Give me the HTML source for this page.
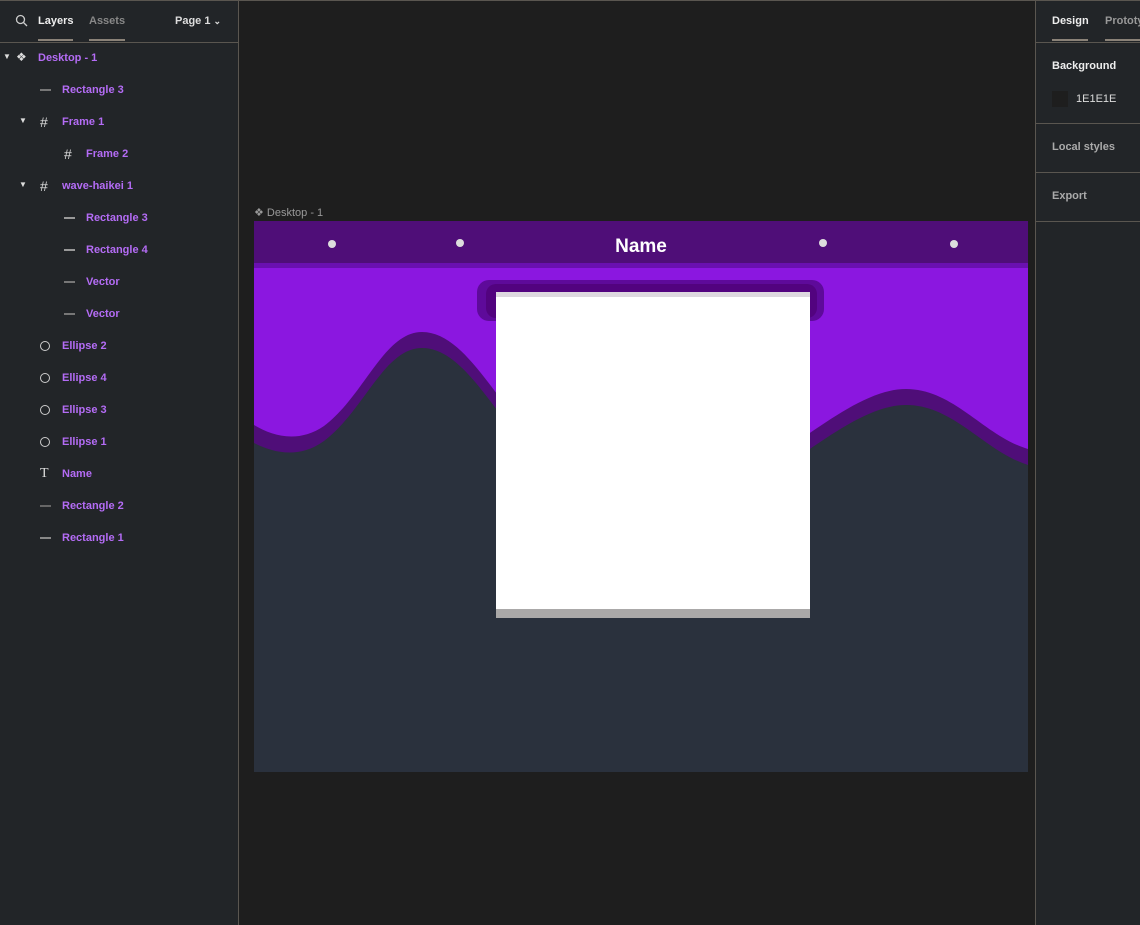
<!DOCTYPE html>
<html><head><style>
*{margin:0;padding:0;box-sizing:border-box}
body{width:1140px;height:925px;background:#1e1e1e;font-family:"Liberation Sans",sans-serif;position:relative;overflow:hidden}
.lp{position:absolute;left:0;top:0;width:239px;height:925px;background:#222528;border-right:1px solid #5a5650;border-top:1px solid #5a5650}
.rp{position:absolute;left:1035px;top:0;width:105px;height:925px;background:#222528;border-left:1px solid #5a5650;border-top:1px solid #5a5650}
.t{position:absolute;font-size:11px;font-weight:bold;white-space:nowrap}
.row{position:absolute;font-size:11px;font-weight:bold;color:#b46cf5;white-space:nowrap}
.ic{position:absolute;color:#ddd;font-size:12px}
.hl{position:absolute;height:1px;background:#5a5650}
</style></head><body>
<div style="position:absolute;left:0;top:0;width:1140px;height:1px;background:#5a5650"></div>
<div style="position:absolute;left:50px;top:0;width:48px;height:2px;background:#1a6fd6"></div>
<div class="lp">
 <svg style="position:absolute;left:15px;top:13px" width="14" height="14" viewBox="0 0 14 14"><circle cx="5.5" cy="5.5" r="4" fill="none" stroke="#ccc" stroke-width="1.3"/><path d="M8.5 8.5L12 12" stroke="#ccc" stroke-width="1.3"/></svg>
 <div class="t" style="left:38px;top:14px;color:#eee">Layers</div>
 <div class="t" style="left:89px;top:14px;color:#888">Assets</div>
 <div style="position:absolute;left:38px;top:38px;width:35px;height:2px;background:#8a8278"></div>
 <div style="position:absolute;left:89px;top:38px;width:36px;height:2px;background:#8a8278"></div>
 <div class="t" style="left:175px;top:14px;color:#ddd">Page 1 <span style="font-size:9px">&#8964;</span></div>
 <div class="hl" style="left:0;top:41px;width:238px"></div>
 <div class="ic" style="left:3px;top:51px;font-size:8px">&#9660;</div>
 <div class="ic" style="left:16px;top:49px;font-size:12px">&#10070;</div>
 <div class="row" style="left:38px;top:51px">Desktop - 1</div>
 <div style="position:absolute;left:40px;top:88px;width:11px;height:2px;background:#777"></div>
 <div class="row" style="left:62px;top:83px">Rectangle 3</div>
 <div class="ic" style="left:19px;top:115px;font-size:8px">&#9660;</div>
 <div class="ic" style="left:40px;top:113px;font-size:14px">#</div>
 <div class="row" style="left:62px;top:115px">Frame 1</div>
 <div class="ic" style="left:64px;top:145px;font-size:14px">#</div>
 <div class="row" style="left:86px;top:147px">Frame 2</div>
 <div class="ic" style="left:19px;top:179px;font-size:8px">&#9660;</div>
 <div class="ic" style="left:40px;top:177px;font-size:14px">#</div>
 <div class="row" style="left:62px;top:179px">wave-haikei 1</div>
 <div style="position:absolute;left:64px;top:216px;width:11px;height:2px;background:#999"></div>
 <div class="row" style="left:86px;top:211px">Rectangle 3</div>
 <div style="position:absolute;left:64px;top:248px;width:11px;height:2px;background:#999"></div>
 <div class="row" style="left:86px;top:243px">Rectangle 4</div>
 <div style="position:absolute;left:64px;top:280px;width:11px;height:2px;background:#777"></div>
 <div class="row" style="left:86px;top:275px">Vector</div>
 <div style="position:absolute;left:64px;top:312px;width:11px;height:2px;background:#777"></div>
 <div class="row" style="left:86px;top:307px">Vector</div>
 <div style="position:absolute;left:40px;top:340px;width:10px;height:10px;border:1px solid #ccc;border-radius:50%"></div>
 <div class="row" style="left:62px;top:339px">Ellipse 2</div>
 <div style="position:absolute;left:40px;top:372px;width:10px;height:10px;border:1px solid #ccc;border-radius:50%"></div>
 <div class="row" style="left:62px;top:371px">Ellipse 4</div>
 <div style="position:absolute;left:40px;top:404px;width:10px;height:10px;border:1px solid #ccc;border-radius:50%"></div>
 <div class="row" style="left:62px;top:403px">Ellipse 3</div>
 <div style="position:absolute;left:40px;top:436px;width:10px;height:10px;border:1px solid #ccc;border-radius:50%"></div>
 <div class="row" style="left:62px;top:435px">Ellipse 1</div>
 <div class="ic" style="left:40px;top:465px;font-size:14px;font-family:'Liberation Serif',serif">T</div>
 <div class="row" style="left:62px;top:467px">Name</div>
 <div style="position:absolute;left:40px;top:504px;width:11px;height:2px;background:#666"></div>
 <div class="row" style="left:62px;top:499px">Rectangle 2</div>
 <div style="position:absolute;left:40px;top:536px;width:11px;height:2px;background:#888"></div>
 <div class="row" style="left:62px;top:531px">Rectangle 1</div>
</div>
<div class="rp">
 <div class="t" style="left:16px;top:14px;color:#eee">Design</div>
 <div class="t" style="left:69px;top:14px;color:#999">Prototype</div>
 <div style="position:absolute;left:16px;top:38px;width:36px;height:2px;background:#8a8278"></div>
 <div style="position:absolute;left:69px;top:38px;width:40px;height:2px;background:#8a8278"></div>
 <div class="hl" style="left:0;top:41px;width:105px"></div>
 <div class="t" style="left:16px;top:59px;color:#eee">Background</div>
 <div style="position:absolute;left:16px;top:90px;width:16px;height:16px;background:#1e1e1e"></div>
 <div class="t" style="left:40px;top:92px;color:#ddd;font-weight:normal">1E1E1E</div>
 <div class="hl" style="left:0;top:122px;width:105px"></div>
 <div class="t" style="left:16px;top:140px;color:#aaa">Local styles</div>
 <div class="hl" style="left:0;top:171px;width:105px"></div>
 <div class="t" style="left:16px;top:189px;color:#aaa">Export</div>
 <div class="hl" style="left:0;top:220px;width:105px"></div>
</div>
<div style="position:absolute;left:254px;top:206px;font-size:11px;color:#999">&#10070; Desktop - 1</div>
<svg style="position:absolute;left:254px;top:221px" width="774" height="551" viewBox="0 0 774 551">
 <rect width="774" height="551" fill="#2a313d"/>
 <rect y="42" width="774" height="240" fill="#8b17e0"/>
 <rect width="774" height="42" fill="#4f0e78"/>
 <rect y="42" width="774" height="5" fill="#6a10b0"/>
 <path d="M0 204 C20 216 45 222 70 205 C110 175 130 111 168 111 C200 111 225 150 250 182 L250 230 L550 230 L550 216 C585 192 620 168 652 168 C700 168 730 215 774 228 L774 300 L0 300Z" fill="#4f0e78"/>
 <path d="M0 222 C20 232 45 238 70 220 C110 190 130 127 168 127 C200 127 225 166 250 198 L250 240 L550 240 L550 232 C585 208 620 184 652 184 C700 184 730 230 774 244 L774 320 L0 320Z" fill="#2a313d"/>
 <rect x="223" y="59" width="347" height="41" rx="12" fill="#5e0a9a"/>
 <rect x="232" y="63" width="331" height="34" rx="10" fill="#52037f"/>
 <rect x="242" y="71" width="314" height="326" fill="#fff"/>
 <rect x="242" y="71" width="314" height="5" fill="#ddd8df"/>
 <rect x="242" y="388" width="314" height="9" fill="#aaa8a8"/>
 <circle cx="78" cy="23" r="4" fill="#ddd"/>
 <circle cx="206" cy="22" r="4" fill="#ddd"/>
 <circle cx="569" cy="22" r="4" fill="#ddd"/>
 <circle cx="700" cy="23" r="4" fill="#ddd"/>
 <text x="387" y="31" text-anchor="middle" font-family="Liberation Sans" font-weight="bold" font-size="19" fill="#fff">Name</text>
</svg>
</body></html>
